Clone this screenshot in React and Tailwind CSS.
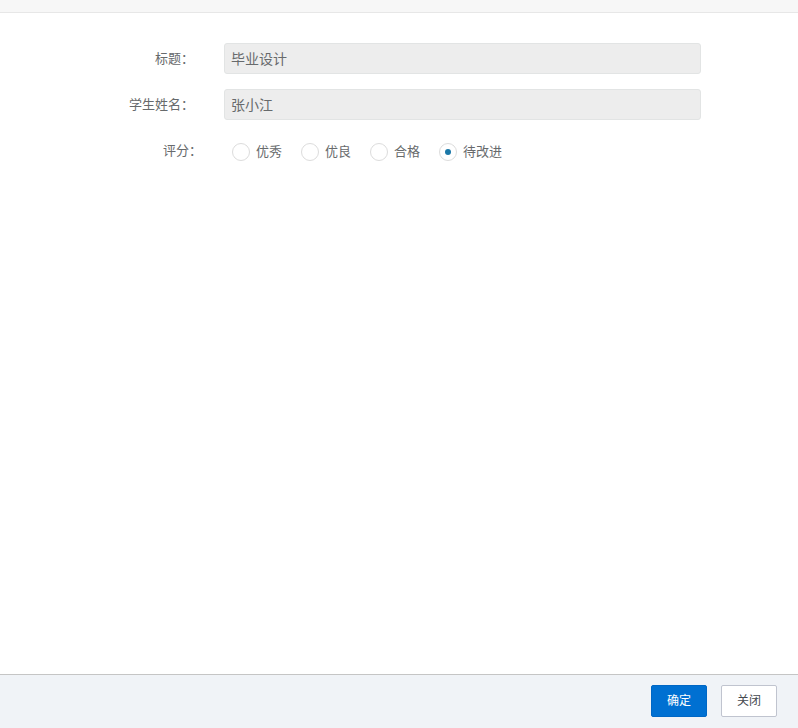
import { useState } from 'react'
import { clsx } from 'clsx'

const fields = [
  { id: 'title', label: '标题：', value: '毕业设计' },
  { id: 'student', label: '学生姓名：', value: '张小江' },
]

const grades = ['优秀', '优良', '合格', '待改进']

function Field({ id, label, value }) {
  return (
    <div className="flex items-center gap-[30px]">
      <label htmlFor={id} className="w-[194px] shrink-0 pb-0.5 text-right text-[13px] leading-5 text-[#676a6c]">
        {label}
      </label>
      <input
        id={id}
        type="text"
        value={value}
        readOnly
        className="flex-1 min-w-0 h-[31px] px-1.5 pb-0.5 rounded-[3px] border border-[#e2e4e4] bg-[#ededed] text-sm text-[#676a6c] outline-none"
      />
    </div>
  )
}

function Radio({ label, checked, onChange }) {
  return (
    <label className="flex items-center gap-1.5 text-[13px] leading-5 text-[#676a6c]">
      <input
        type="radio"
        name="grade"
        value={label}
        checked={checked}
        onChange={onChange}
        className="appearance-none grid place-items-center size-[18px] shrink-0 rounded-full border border-[#dcdcdc] bg-white before:size-1.5 before:rounded-full checked:before:bg-[#1b78a8]"
      />
      <span className="pb-0.5 leading-[18px]">{label}</span>
    </label>
  )
}

function Button({ children, primary, type = 'button' }) {
  return (
    <button
      type={type}
      className={clsx(
        'w-14 h-8 pb-0.5 rounded-[2px] border text-xs',
        primary ? 'border-[#0067c5] bg-[#0070d2] text-white' : 'border-[#c0c4cf] bg-white text-[#45494f]'
      )}
    >
      {children}
    </button>
  )
}

export default function App() {
  const [grade, setGrade] = useState('待改进')

  return (
    <form
      onSubmit={e => e.preventDefault()}
      className="min-h-screen flex flex-col bg-white font-['Noto_Sans_CJK_SC',sans-serif]"
    >
      <div className="h-[13px] shrink-0 border-b border-[#e7e7e7] bg-[#f7f7f7]" />

      <main className="flex-1 flex flex-col gap-[15px] pt-[30px] pr-[97px]">
        {fields.map(f => (
          <Field key={f.id} {...f} />
        ))}

        <div role="radiogroup" aria-labelledby="grade-label" className="flex items-start gap-[30px] pt-[5px]">
          <span id="grade-label" className="w-[202px] shrink-0 text-right text-[13px] leading-5 text-[#676a6c]">
            评分：
          </span>
          <div className="flex flex-wrap gap-[19px] pt-0.5">
            {grades.map(g => (
              <Radio key={g} label={g} checked={grade === g} onChange={() => setGrade(g)} />
            ))}
          </div>
        </div>
      </main>

      <footer className="flex justify-end gap-3.5 border-t border-[#c5c5c5] bg-[#f0f3f7] pt-2.5 pr-[21px] pb-[11px]">
        <Button type="submit" primary>确定</Button>
        <Button>关闭</Button>
      </footer>
    </form>
  )
}
